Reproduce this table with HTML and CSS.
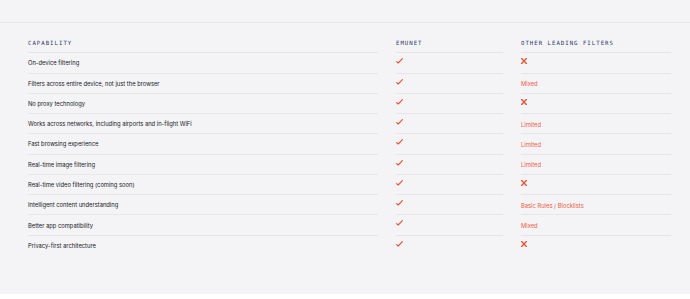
FILE: index.html
```html
<!DOCTYPE html>
<html>
<head>
<meta charset="utf-8">
<link rel="stylesheet" href="styles.css">
</head>
<body>
<section class="compare">
  <div class="table">
    <div class="cell head">Capability</div>
    <div class="cell head">Emunet</div>
    <div class="cell head">Other leading filters</div>

    <div class="cell name">On-device filtering</div>
    <div class="cell mark"><svg class="check" viewBox="0 0 7 6"><path d="M0.6 3.6 L2.2 5 L6.4 0.6"/></svg></div>
    <div class="cell mark"><svg class="cross" viewBox="0 0 6 6"><path d="M0.6 0.6 L5.4 5.4 M5.4 0.6 L0.6 5.4"/></svg></div>

    <div class="cell name">Filters across entire device, not just the browser</div>
    <div class="cell mark"><svg class="check" viewBox="0 0 7 6"><path d="M0.6 3.6 L2.2 5 L6.4 0.6"/></svg></div>
    <div class="cell note">Mixed</div>

    <div class="cell name">No proxy technology</div>
    <div class="cell mark"><svg class="check" viewBox="0 0 7 6"><path d="M0.6 3.6 L2.2 5 L6.4 0.6"/></svg></div>
    <div class="cell mark"><svg class="cross" viewBox="0 0 6 6"><path d="M0.6 0.6 L5.4 5.4 M5.4 0.6 L0.6 5.4"/></svg></div>

    <div class="cell name">Works across networks, including airports and in-flight WiFi</div>
    <div class="cell mark"><svg class="check" viewBox="0 0 7 6"><path d="M0.6 3.6 L2.2 5 L6.4 0.6"/></svg></div>
    <div class="cell note">Limited</div>

    <div class="cell name">Fast browsing experience</div>
    <div class="cell mark"><svg class="check" viewBox="0 0 7 6"><path d="M0.6 3.6 L2.2 5 L6.4 0.6"/></svg></div>
    <div class="cell note">Limited</div>

    <div class="cell name">Real-time image filtering</div>
    <div class="cell mark"><svg class="check" viewBox="0 0 7 6"><path d="M0.6 3.6 L2.2 5 L6.4 0.6"/></svg></div>
    <div class="cell note">Limited</div>

    <div class="cell name">Real-time video filtering (coming soon)</div>
    <div class="cell mark"><svg class="check" viewBox="0 0 7 6"><path d="M0.6 3.6 L2.2 5 L6.4 0.6"/></svg></div>
    <div class="cell mark"><svg class="cross" viewBox="0 0 6 6"><path d="M0.6 0.6 L5.4 5.4 M5.4 0.6 L0.6 5.4"/></svg></div>

    <div class="cell name">Intelligent content understanding</div>
    <div class="cell mark"><svg class="check" viewBox="0 0 7 6"><path d="M0.6 3.6 L2.2 5 L6.4 0.6"/></svg></div>
    <div class="cell note">Basic Rules / Blocklists</div>

    <div class="cell name">Better app compatibility</div>
    <div class="cell mark"><svg class="check" viewBox="0 0 7 6"><path d="M0.6 3.6 L2.2 5 L6.4 0.6"/></svg></div>
    <div class="cell note">Mixed</div>

    <div class="cell name last">Privacy-first architecture</div>
    <div class="cell mark last"><svg class="check" viewBox="0 0 7 6"><path d="M0.6 3.6 L2.2 5 L6.4 0.6"/></svg></div>
    <div class="cell mark last"><svg class="cross" viewBox="0 0 6 6"><path d="M0.6 0.6 L5.4 5.4 M5.4 0.6 L0.6 5.4"/></svg></div>
  </div>
</section>
</body>
</html>
```

FILE: styles.css
```css
html, body {
  margin: 0;
  padding: 0;
  background: #ffffff;
}

.compare {
  box-sizing: border-box;
  height: 294px;
  background: #f4f4f6;
  padding-top: 22px;
}

.table {
  border-top: 1px solid #e6e6ea;
  margin-left: -28px;
  padding: 10px 19px 0 56px;
  display: grid;
  grid-template-columns: 350px 107px 150px;
  grid-auto-rows: 20.27px;
  column-gap: 18px;
}

.cell {
  box-sizing: border-box;
  border-bottom: 1px solid #e6e6ea;
  display: flex;
  align-items: center;
  font-family: Inter, "Liberation Sans", sans-serif;
  font-size: 5.8px;
  color: #16171d;
  white-space: nowrap;
}

.cell.last {
  border-bottom: none;
}

.head {
  font-family: "DejaVu Sans Mono", "Liberation Mono", monospace;
  font-size: 5.7px;
  letter-spacing: 1px;
  text-transform: uppercase;
  color: #2f3566;
  padding-top: 1px;
}

.note {
  color: #f05a3c;
  padding-top: 1px;
}

.mark {
  align-items: flex-start;
  padding-top: 5px;
}

.mark svg {
  display: block;
  fill: none;
  stroke: #ee5030;
  stroke-linecap: round;
  stroke-linejoin: round;
}

.check {
  width: 7px;
  height: 6px;
  stroke-width: 1.1;
}

.cross {
  width: 6px;
  height: 6px;
  stroke-width: 1.35;
}
```
